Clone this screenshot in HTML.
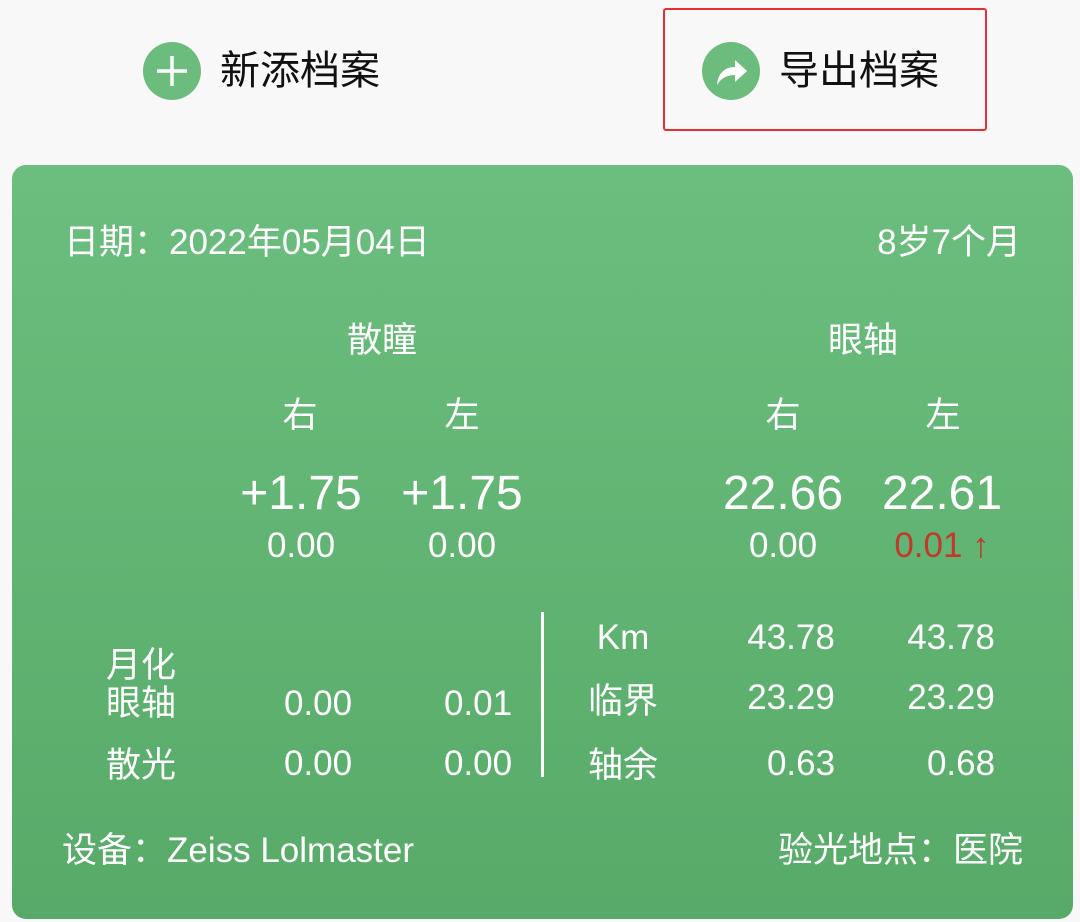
<!DOCTYPE html>
<html><head><meta charset="utf-8"><style>
*{margin:0;padding:0;box-sizing:border-box}
body{width:1080px;height:922px;background:#f8f8f8;position:relative;overflow:hidden;font-family:"Liberation Sans","Noto Sans CJK SC",sans-serif}
.t{position:absolute;width:240px;text-align:center;white-space:nowrap;color:#fff;height:50px;line-height:50px;font-size:35px}
.card{position:absolute;left:12px;top:165px;width:1061px;height:754px;border-radius:14px;background:linear-gradient(#6cbe7e,#58aa69)}
.ic{position:absolute;width:58px;height:58px;border-radius:50%;background:#6cbd7d}
</style></head><body>
<div class="ic" style="left:143px;top:42px"><svg width="58" height="58"><path d="M29 14V44M14 29H44" stroke="#fff" stroke-width="3.5"/></svg></div>
<div style="position:absolute;left:220px;top:46px;font-size:40px;line-height:50px;color:#111">新添档案</div>
<div style="position:absolute;left:663px;top:8px;width:324px;height:123px;border:2px solid #e53030;border-radius:3px"></div>
<div class="ic" style="left:702px;top:42px"><svg width="58" height="58"><path d="M15 43C16 31 23 25 33 25V18L45 29L33 40V33C25 33 19 36 15 43Z" fill="#fff"/></svg></div>
<div style="position:absolute;left:779px;top:46px;font-size:40px;line-height:50px;color:#111">导出档案</div>
<div class="card"></div>
<div class="t" style="left:64px;top:218px;text-align:left">日期：2022年05月04日</div>
<div class="t" style="left:781px;top:218px;text-align:right">8岁7个月</div>
<div class="t" style="left:262px;top:316px">散瞳</div>
<div class="t" style="left:743px;top:316px">眼轴</div>
<div class="t" style="left:180px;top:391px">右</div>
<div class="t" style="left:342px;top:391px">左</div>
<div class="t" style="left:663px;top:391px">右</div>
<div class="t" style="left:823px;top:391px">左</div>
<div class="t" style="left:181px;top:469px;font-size:48px">+1.75</div>
<div class="t" style="left:342px;top:469px;font-size:48px">+1.75</div>
<div class="t" style="left:663px;top:469px;font-size:48px">22.66</div>
<div class="t" style="left:822px;top:469px;font-size:48px">22.61</div>
<div class="t" style="left:181px;top:521px">0.00</div>
<div class="t" style="left:342px;top:521px">0.00</div>
<div class="t" style="left:663px;top:521px">0.00</div>
<div class="t" style="left:822px;top:521px;color:#c0392b">0.01 ↑</div>
<div class="t" style="left:21px;top:641px">月化</div>
<div class="t" style="left:21px;top:679px">眼轴</div>
<div class="t" style="left:21px;top:741px">散光</div>
<div class="t" style="left:198px;top:679px">0.00</div>
<div class="t" style="left:358px;top:679px">0.01</div>
<div class="t" style="left:198px;top:739px">0.00</div>
<div class="t" style="left:358px;top:739px">0.00</div>
<div style="position:absolute;left:541px;top:612px;width:3px;height:165px;background:#fff"></div>
<div class="t" style="left:503px;top:613px">Km</div>
<div class="t" style="left:503px;top:677px">临界</div>
<div class="t" style="left:503px;top:741px">轴余</div>
<div class="t" style="left:671px;top:613px">43.78</div>
<div class="t" style="left:831px;top:613px">43.78</div>
<div class="t" style="left:671px;top:673px">23.29</div>
<div class="t" style="left:831px;top:673px">23.29</div>
<div class="t" style="left:681px;top:739px">0.63</div>
<div class="t" style="left:841px;top:739px">0.68</div>
<div class="t" style="left:62px;top:826px;text-align:left">设备：Zeiss Lolmaster</div>
<div class="t" style="left:778px;top:826px;text-align:right">验光地点：医院</div>
</body></html>
